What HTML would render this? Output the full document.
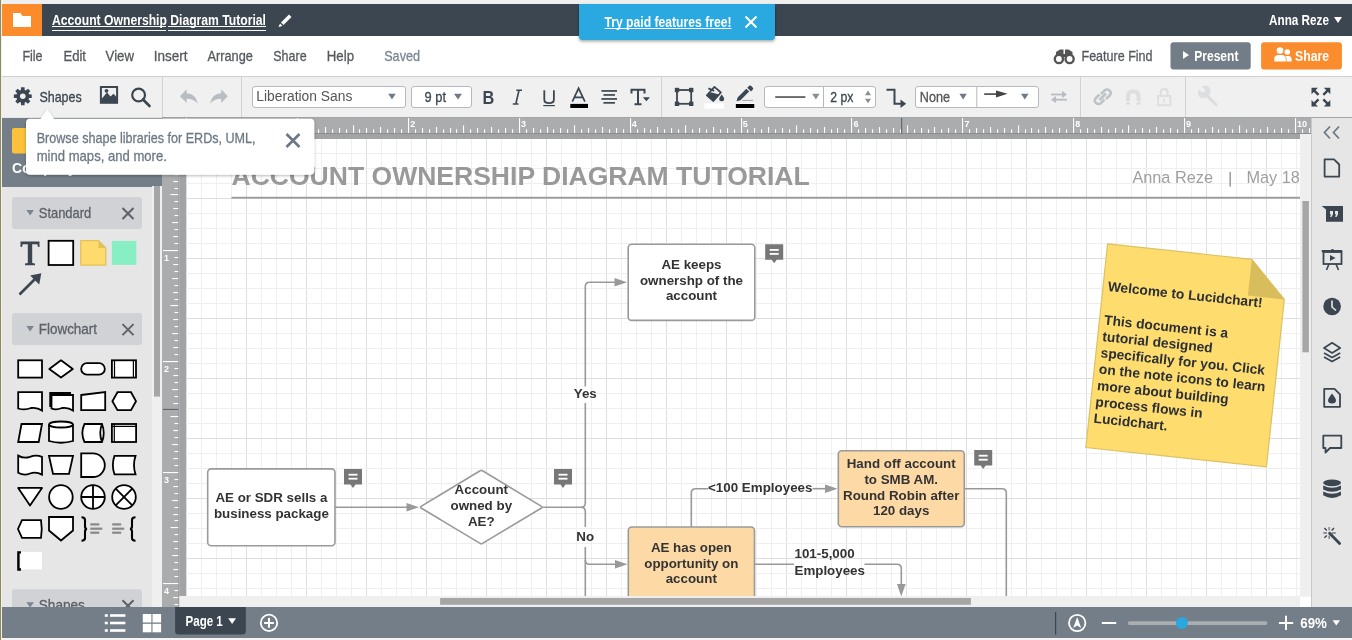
<!DOCTYPE html><html><head><meta charset="utf-8"><style>html,body{margin:0;padding:0;width:1352px;height:640px;overflow:hidden;background:#fff}svg{display:block;font-family:"Liberation Sans",sans-serif;will-change:transform}</style></head><body>
<svg width="1352" height="640" viewBox="0 0 1352 640">
<rect x="0" y="0" width="1352" height="640" fill="#ffffff" />
<rect x="0" y="0" width="1352" height="4" fill="#efefef" />
<rect x="0" y="4" width="1352" height="32" fill="#3c4650" />
<rect x="2" y="4" width="40" height="32" fill="#fb8b2b" />
<path d="M13 13 H20.5 L22.5 16 H31 V27 H13 Z" fill="#fff"/>
<text x="52" y="24.8" font-size="14" fill="#fff" font-weight="bold" textLength="214" lengthAdjust="spacingAndGlyphs" >Account Ownership Diagram Tutorial</text>
<rect x="52" y="26" width="114" height="1" fill="#fff" />
<rect x="168" y="26" width="98" height="1" fill="#fff" />
<rect x="52" y="30" width="114" height="1" fill="#fff" />
<rect x="168" y="30" width="98" height="1" fill="#fff" />
<path d="M281 22.5 L289 14.5 L291.5 17 L283.5 25 Z M280 23.5 L282.5 26 L278.5 27 Z" fill="#fff"/>
<text x="1269" y="24.7" font-size="14" fill="#fff" font-weight="bold" textLength="60" lengthAdjust="spacingAndGlyphs" >Anna Reze</text>
<path d="M1334 17 H1342 L1338 23 Z" fill="#fff"/>
<rect x="0" y="36" width="1352" height="40" fill="#ffffff" />
<text x="22.4" y="61.1" font-size="14.5" fill="#55595e" textLength="20.2" lengthAdjust="spacingAndGlyphs" stroke="#55595e" stroke-width="0.3">File</text>
<text x="63.4" y="61.1" font-size="14.5" fill="#55595e" textLength="22.6" lengthAdjust="spacingAndGlyphs" stroke="#55595e" stroke-width="0.3">Edit</text>
<text x="105.6" y="61.1" font-size="14.5" fill="#55595e" textLength="28.4" lengthAdjust="spacingAndGlyphs" stroke="#55595e" stroke-width="0.3">View</text>
<text x="153.8" y="61.1" font-size="14.5" fill="#55595e" textLength="33.8" lengthAdjust="spacingAndGlyphs" stroke="#55595e" stroke-width="0.3">Insert</text>
<text x="207.5" y="61.1" font-size="14.5" fill="#55595e" textLength="45.4" lengthAdjust="spacingAndGlyphs" stroke="#55595e" stroke-width="0.3">Arrange</text>
<text x="273.3" y="61.1" font-size="14.5" fill="#55595e" textLength="33.3" lengthAdjust="spacingAndGlyphs" stroke="#55595e" stroke-width="0.3">Share</text>
<text x="326.8" y="61.1" font-size="14.5" fill="#55595e" textLength="27.2" lengthAdjust="spacingAndGlyphs" stroke="#55595e" stroke-width="0.3">Help</text>
<text x="384.2" y="61.1" font-size="14.5" fill="#7a8694" textLength="35.8" lengthAdjust="spacingAndGlyphs" stroke="#7a8694" stroke-width="0.3">Saved</text>
<g fill="#555"><path d="M1056 52 L1060 49.5 H1063.5 V56 H1056 Z M1065 49.5 H1068.5 L1072.5 52 V56 H1065 Z M1062.5 54 H1066 V57 H1062.5 Z"/><circle cx="1058.9" cy="59" r="4.1" fill="none" stroke="#555" stroke-width="2.4"/><circle cx="1069.6" cy="59" r="4.1" fill="none" stroke="#555" stroke-width="2.4"/></g>
<text x="1081.5" y="60.9" font-size="14.5" fill="#555a60" textLength="71" lengthAdjust="spacingAndGlyphs" stroke="#555a60" stroke-width="0.3">Feature Find</text>
<rect x="1170.5" y="42.2" width="80.2" height="27.3" rx="3" fill="#737d87"/>
<path d="M1183 51 L1189 55 L1183 59 Z" fill="#fff"/>
<text x="1194.2" y="61" font-size="14.5" fill="#fff" font-weight="bold" textLength="44.3" lengthAdjust="spacingAndGlyphs" >Present</text>
<rect x="1261.1" y="42.2" width="80.8" height="27.3" rx="3" fill="#fb8c2e"/>
<g fill="#fff"><circle cx="1280" cy="50.5" r="3.3"/><path d="M1274.3 61.5 V58.5 Q1274.3 55.5 1277.5 55 H1282.5 Q1285.7 55.5 1285.7 58.5 V61.5 Z"/><circle cx="1287.3" cy="52" r="2.8"/><path d="M1286.5 61.5 V58.5 Q1286.5 56.3 1285 55.9 L1286 55.9 H1288.8 Q1291.6 56.3 1291.6 59 V61.5 Z"/></g>
<text x="1295" y="61" font-size="14.5" fill="#fff" font-weight="bold" textLength="34" lengthAdjust="spacingAndGlyphs" >Share</text>
<defs><filter id="sh" x="-10%" y="-30%" width="120%" height="180%"><feDropShadow dx="0" dy="1.5" stdDeviation="1.5" flood-color="#000" flood-opacity="0.35"/></filter><filter id="sh2" x="-10%" y="-30%" width="120%" height="160%"><feDropShadow dx="0" dy="1" stdDeviation="1.5" flood-color="#000" flood-opacity="0.3"/></filter></defs>
<path d="M579 4 H775 V36.5 Q775 40 771.5 40 H582.5 Q579 40 579 36.5 Z" fill="#29a8e0" filter="url(#sh)"/>
<text x="604.5" y="26.9" font-size="14" fill="#fff" font-weight="bold" textLength="127" lengthAdjust="spacingAndGlyphs" >Try paid features free!</text>
<rect x="604.5" y="28" width="127" height="1" fill="#fff" />
<path d="M745.5 16.5 L756.5 27.5 M756.5 16.5 L745.5 27.5" stroke="#fff" stroke-width="2"/>
<rect x="0" y="76" width="1352" height="41" fill="#f0f0f0" />
<rect x="0" y="76" width="1352" height="1" fill="#cfcfcf" />
<rect x="0" y="117" width="1352" height="1" fill="#a3a6a9" />
<rect x="162" y="77" width="1" height="40" fill="#d2d2d2" />
<rect x="241" y="77" width="1" height="40" fill="#d2d2d2" />
<rect x="661" y="77" width="1" height="40" fill="#d2d2d2" />
<rect x="1080" y="77" width="1" height="40" fill="#d2d2d2" />
<rect x="1185" y="77" width="1" height="40" fill="#d2d2d2" />
<path d="M20.90 89.98 L21.06 87.27 L24.54 87.27 L24.70 89.98 L25.85 90.46 L27.89 88.66 L30.34 91.11 L28.54 93.15 L29.02 94.30 L31.73 94.46 L31.73 97.94 L29.02 98.10 L28.54 99.25 L30.34 101.29 L27.89 103.74 L25.85 101.94 L24.70 102.42 L24.54 105.13 L21.06 105.13 L20.90 102.42 L19.75 101.94 L17.71 103.74 L15.26 101.29 L17.06 99.25 L16.58 98.10 L13.87 97.94 L13.87 94.46 L16.58 94.30 L17.06 93.15 L15.26 91.11 L17.71 88.66 L19.75 90.46 Z" fill="#3c4650"/><circle cx="22.8" cy="96.2" r="2.8" fill="#f0f0f0"/>
<text x="39.4" y="101.7" font-size="14.5" fill="#3c4650" textLength="42.3" lengthAdjust="spacingAndGlyphs" stroke="#3c4650" stroke-width="0.3">Shapes</text>
<rect x="100.9" y="87" width="16.2" height="15.8" fill="none" stroke="#3c4650" stroke-width="2"/><path d="M101.5 102.5 V99 L107 92.5 L110.5 96.5 L113.5 93.8 L117 97.5 V102.5 Z" fill="#3c4650"/><circle cx="106.5" cy="90.8" r="1.9" fill="#3c4650"/>
<circle cx="138.6" cy="95" r="6.4" fill="none" stroke="#3c4650" stroke-width="2.2"/><path d="M143 99.5 L149.5 106" stroke="#3c4650" stroke-width="2.6" stroke-linecap="round"/>
<path d="M180 96.2 L186.6 89.2 V93.2 Q195.8 93.6 197.8 103.6 Q193.5 98.8 186.6 98.8 V103 Z" fill="#b9bdc1"/>
<path d="M227.8 96.2 L221.2 89.2 V93.2 Q212 93.6 210 103.6 Q214.3 98.8 221.2 98.8 V103 Z" fill="#b9bdc1"/>
<rect x="252.5" y="86.5" width="153" height="21" rx="2.5" fill="#fff" stroke="#b5b9bd"/>
<text x="256.3" y="101.4" font-size="14" fill="#555" textLength="96" lengthAdjust="spacingAndGlyphs" >Liberation Sans</text>
<path d="M388.2 93.8 H395.7 L392 99.4 Z" fill="#707b86"/>
<rect x="411.5" y="86.5" width="60" height="21" rx="2.5" fill="#fff" stroke="#b5b9bd"/>
<text x="424.6" y="101.6" font-size="14.5" fill="#3c4650" textLength="21.4" lengthAdjust="spacingAndGlyphs" stroke="#3c4650" stroke-width="0.3">9 pt</text>
<path d="M454 93.8 H462 L458 99.4 Z" fill="#707b86"/>
<text x="482.6" y="104" font-size="18" fill="#3c4650" font-weight="bold" textLength="11.8" lengthAdjust="spacingAndGlyphs" >B</text>
<path d="M516.3 90.2 H522 M512.8 104 H518.5 M519 90.2 L515.8 104" stroke="#3c4650" stroke-width="1.6" fill="none"/>
<path d="M544.3 90.2 V99.5 Q544.3 103.2 549 103.2 Q553.9 103.2 553.9 99.5 V90.2" stroke="#3c4650" stroke-width="1.8" fill="none"/>
<rect x="543.3" y="105" width="11.6" height="1.2" fill="#3c4650" />
<path d="M572.3 101.7 L578.6 88.3 L584.9 101.7 M574.4 97.3 H582.8" stroke="#3c4650" stroke-width="1.7" fill="none"/>
<rect x="570.3" y="103.9" width="17.7" height="4.1" fill="#000" />
<rect x="601.4" y="90.10000000000001" width="15.600000000000023" height="1.7" fill="#3c4650" />
<rect x="603.4" y="94.10000000000001" width="11.600000000000023" height="1.7" fill="#3c4650" />
<rect x="601.4" y="98.10000000000001" width="15.600000000000023" height="1.7" fill="#3c4650" />
<rect x="603.4" y="102.0" width="11.600000000000023" height="1.7" fill="#3c4650" />
<path d="M631.5 93.5 V89.8 H644.5 V93.5 M638 89.8 V104.3 M634.5 104.3 H641.5" stroke="#3c4650" stroke-width="2" fill="none"/><path d="M642.8 97.2 H650 L646.4 101.2 Z" fill="#3c4650"/>
<rect x="677" y="90" width="14.2" height="13.8" fill="none" stroke="#3c4650" stroke-width="1.8"/>
<rect x="674.8" y="87.8" width="4.4" height="4.4" fill="#3c4650" />
<rect x="689.0" y="87.8" width="4.4" height="4.4" fill="#3c4650" />
<rect x="674.8" y="101.6" width="4.4" height="4.4" fill="#3c4650" />
<rect x="689.0" y="101.6" width="4.4" height="4.4" fill="#3c4650" />
<path d="M714.4 86.9 L720.9 92.5 L713.3 100.9 L706.9 95.3 Z" fill="none" stroke="#3c4650" stroke-width="1.7" stroke-linejoin="round"/><path d="M706.1 95.3 L710.9 92.2 L719.6 94.8 L713.3 101.7 Z" fill="#3c4650"/><path d="M708.4 88.4 L714.2 90.8" stroke="#3c4650" stroke-width="1.8"/><path d="M721.7 94.6 Q724.2 97.8 724.2 98.8 A2.5 2.5 0 0 1 719.2 98.8 Q719.2 97.8 721.7 94.6 Z" fill="#3c4650"/>
<rect x="704" y="103" width="20.2" height="6" fill="#fafafa" />
<rect x="705" y="104" width="18.2" height="4" fill="#fff" />
<path d="M736.6 101.2 L737.6 97.4 L746.3 88.7 L749.2 91.6 L740.5 100.3 Z M747.3 87.7 L749.2 85.8 Q750.1 85 751 85.8 L752.9 87.7 Q753.7 88.6 752.9 89.5 L751 91.4 Z" fill="#3c4650"/>
<rect x="742.3" y="99.9" width="10.7" height="1.1" fill="#a9aeb3" />
<rect x="735" y="103" width="20.3" height="6" fill="#fafafa" />
<rect x="735.8" y="104" width="18.5" height="4" fill="#000" />
<rect x="764.5" y="86.5" width="111" height="21" rx="2.5" fill="#fff" stroke="#b5b9bd"/>
<rect x="823" y="87" width="1" height="20" fill="#b5b9bd" />
<rect x="775.2" y="96.3" width="30.2" height="1.5" fill="#444" />
<path d="M812.1 93.8 H819.6 L815.9 99.4 Z" fill="#8a8f94"/>
<text x="830.2" y="101.6" font-size="14.5" fill="#3c4650" textLength="23.1" lengthAdjust="spacingAndGlyphs" stroke="#3c4650" stroke-width="0.3">2 px</text>
<path d="M865 95.2 L868 90.6 L871.1 95.2 Z M865 98.7 H871.1 L868 103.3 Z" fill="#8a8f94"/>
<path d="M886.5 89.8 H894.5 V103.8 H902" stroke="#3c4650" stroke-width="2" fill="none"/><path d="M900.5 99.5 L906.2 103.8 L900.5 108 Z" fill="#3c4650"/>
<rect x="915.5" y="86.5" width="123" height="21" rx="2.5" fill="#fff" stroke="#b5b9bd"/>
<rect x="976.3" y="87" width="1" height="20" fill="#b5b9bd" />
<text x="919.8" y="101.7" font-size="14.5" fill="#555" textLength="30.2" lengthAdjust="spacingAndGlyphs" stroke="#555" stroke-width="0.3">None</text>
<path d="M959.4 93.8 H966.8 L963.1 99.4 Z" fill="#707b86"/>
<rect x="984.2" y="93.3" width="15" height="1.6" fill="#444" />
<path d="M996 90.6 L1007.6 93.8 L996 97.4 Z" fill="#444"/>
<path d="M1021 93.8 H1028.6 L1024.8 99.4 Z" fill="#707b86"/>
<g fill="#b9bdc1"><rect x="1051" y="93.6" width="14" height="1.8"/><path d="M1062 90.8 L1067 94.5 L1062 98 Z"/><rect x="1053" y="98.8" width="14" height="1.8"/><path d="M1056 96 L1051 99.7 L1056 103 Z"/></g>
<g stroke="#bfc3c6" stroke-width="2.6" fill="none"><path d="M1101 94 L1104.5 90.5 Q1107 88.5 1109.5 90.5 Q1112 93 1109.5 95.5 L1106 99"/><path d="M1104.5 99.5 L1101 103 Q1098.5 105 1096 103 Q1093.5 100.5 1096 98 L1099.5 94.5"/><path d="M1099.5 100 L1106 93.5"/></g>
<path d="M1128 104.8 V97.3 Q1128 91.2 1133.3 91.2 Q1138.6 91.2 1138.6 97.3 V104.8" stroke="#dcdedf" stroke-width="4" fill="none"/>
<rect x="1125" y="101" width="17" height="1.1" fill="#f0f0f0" />
<path d="M1160.8 96 V92.3 Q1160.8 89 1164.2 89 Q1167.6 89 1167.6 92.3 V96" stroke="#dcdedf" stroke-width="2" fill="none"/><rect x="1158" y="96" width="12.4" height="9.2" fill="none" stroke="#dcdedf" stroke-width="1.9"/><rect x="1163.4" y="98.5" width="1.6" height="4" fill="#dcdedf"/>
<path d="M1216 104.6 L1206.5 95.1" stroke="#dcdedf" stroke-width="3" stroke-linecap="round"/><path d="M1207.3 96.5 A5 5 0 0 1 1199.2 89.6 L1202.3 92.4 L1204.6 91.9 L1205.1 89.6 L1202 86.8 A5 5 0 0 1 1208.8 94.8 Z" fill="#dcdedf"/>
<g fill="#3c4650"><path d="M1311.5 87.8 H1318 L1311.5 94.3 Z"/><path d="M1330.3 87.8 H1323.8 L1330.3 94.3 Z"/><path d="M1311.5 106.4 H1318 L1311.5 99.9 Z"/><path d="M1330.3 106.4 H1323.8 L1330.3 99.9 Z"/></g><path d="M1313 89.3 L1318.5 94.8 M1328.8 89.3 L1323.3 94.8 M1313 104.9 L1318.5 99.4 M1328.8 104.9 L1323.3 99.4" stroke="#3c4650" stroke-width="2.4"/>
<rect x="0" y="117" width="162" height="490" fill="#e6e6e6" />
<rect x="0" y="117" width="1" height="523" fill="#8f8c5a" />
<rect x="1" y="117" width="1" height="490" fill="#eeeeee" />
<rect x="2" y="118" width="160" height="69" fill="#737e88" />
<rect x="12" y="128" width="30" height="25.5" rx="2" fill="#fbc13a"/>
<text x="12.1" y="172.9" font-size="14" fill="#fff" font-weight="bold" >Company</text>
<rect x="152" y="186" width="10" height="421" fill="#efefef" />
<rect x="154" y="186" width="6" height="210.6" fill="#a6a6a6" />
<rect x="12" y="197" width="130" height="32" rx="3" fill="#d0d2d5"/>
<path d="M26.4 210 H33.9 L30.1 215.4 Z" fill="#7a8591"/>
<text x="38.8" y="218" font-size="14.5" fill="#5d6167" textLength="52.4" lengthAdjust="spacingAndGlyphs" stroke="#5d6167" stroke-width="0.3">Standard</text>
<path d="M122.5 208 L133.5 219 M133.5 208 L122.5 219" stroke="#5d6167" stroke-width="2"/>
<rect x="12" y="313.1" width="130" height="32" rx="3" fill="#d0d2d5"/>
<path d="M26.4 326.1 H33.9 L30.1 331.5 Z" fill="#7a8591"/>
<text x="38.8" y="334.1" font-size="14.5" fill="#5d6167" textLength="58.2" lengthAdjust="spacingAndGlyphs" stroke="#5d6167" stroke-width="0.3">Flowchart</text>
<path d="M122.5 324.1 L133.5 335.1 M133.5 324.1 L122.5 335.1" stroke="#5d6167" stroke-width="2"/>
<rect x="12" y="589.2" width="130" height="32" rx="3" fill="#d0d2d5"/>
<path d="M26.4 602.2 H33.9 L30.1 607.6 Z" fill="#7a8591"/>
<text x="38.8" y="610.2" font-size="14.5" fill="#5d6167" textLength="46" lengthAdjust="spacingAndGlyphs" stroke="#5d6167" stroke-width="0.3">Shapes</text>
<path d="M122.5 600.2 L133.5 611.2 M133.5 600.2 L122.5 611.2" stroke="#5d6167" stroke-width="2"/>
<path d="M20.5 241.5 H39.5 V247 H38 L37.3 244.3 H32.2 V263 L35 263.6 V265.3 H25 V263.6 L27.8 263 V244.3 H22.7 L22 247 H20.5 Z" fill="#3c4650"/>
<rect x="48.6" y="240.8" width="24.6" height="24.2" fill="#fff" stroke="#000" stroke-width="1.8"/>
<path d="M80.8 240.6 H98.5 L105.8 248 V265.2 H80.8 Z" fill="#ffdb6d" stroke="#e2c15a" stroke-width="1.3"/><path d="M98.5 240.6 V248 H105.8 Z" fill="#e2c15a"/>
<rect x="111.9" y="240.9" width="24.4" height="24" fill="#88eec4" />
<path d="M19.5 294.5 L36 278" stroke="#3c4650" stroke-width="2.6"/><path d="M41.3 273.3 L39.2 284.5 L30.2 275.5 Z" fill="#3c4650"/>
<rect x="18.2" y="360.3" width="23.8" height="17.3" fill="#fff" stroke="#000" stroke-width="1.8"/><path d="M49.3 369 L61 360.3 L72.8 369 L61 377.6 Z" fill="#fff" stroke="#000" stroke-width="1.8" stroke-linejoin="round"/><rect x="81.2" y="363.2" width="23.6" height="11.4" rx="5.7" fill="#fff" stroke="#000" stroke-width="1.8"/><rect x="111.9" y="360.3" width="24.1" height="17.3" fill="#fff" stroke="#000" stroke-width="1.8"/><path d="M114.5 360.5 V377.5 M133.4 360.5 V377.5" stroke="#000" stroke-width="1.2"/><path d="M18.2 392.2 H42 V410.5 Q37 407 31 408 Q25 410.5 18.2 408.5 Z" fill="#fff" stroke="#000" stroke-width="1.8"/><path d="M51.5 395 H73 V410.5 Q68 407 62 408 Q56 410.5 51.5 408.5 Z" fill="#fff" stroke="#000" stroke-width="1.8"/><path d="M49.3 392 H71 V395 H51.5 V407 H49.3 Z" fill="#000"/><path d="M81.2 395 L105.2 392 V410.2 H81.2 Z" fill="#fff" stroke="#000" stroke-width="1.8"/><path d="M112.4 401.2 L117.5 392.2 H131 L136 401.2 L131 410.2 H117.5 Z" fill="#fff" stroke="#000" stroke-width="1.8"/><path d="M21.5 424 H42 L38.7 442 H18.2 Z" fill="#fff" stroke="#000" stroke-width="1.8"/><path d="M49 424.5 V441 Q61 444.5 73 441 V424.5" fill="#fff" stroke="#000" stroke-width="1.8"/><ellipse cx="61" cy="424.5" rx="12" ry="3" fill="#fff" stroke="#000" stroke-width="1.8"/><path d="M84.5 424 H102 Q105.5 433 102 442 H84.5 Q80.2 433 84.5 424 Z" fill="#fff" stroke="#000" stroke-width="1.8"/><path d="M102 424 Q98.5 433 102 442" fill="none" stroke="#000" stroke-width="1.8"/><rect x="111.9" y="424" width="24.2" height="18" fill="#fff" stroke="#000" stroke-width="1.8"/><path d="M112 426.3 H136 M114.3 424 V442" stroke="#000" stroke-width="1.2"/><path d="M18.2 455.6 Q24 459 30 456.8 Q36 454.3 42 456.8 V474.6 Q36 471.3 30 473.5 Q24 476 18.2 472.8 Z" fill="#fff" stroke="#000" stroke-width="1.8"/><path d="M49 455.9 H73 L69 473.8 H53 Z" fill="#fff" stroke="#000" stroke-width="1.8"/><path d="M81.2 453.4 H93 A11.8 11.8 0 0 1 93 477 H81.2 Z" fill="#fff" stroke="#000" stroke-width="1.8"/><path d="M114.5 455.9 H135.5 Q132.5 465 135.5 474.3 H114.5 Q111.2 465 114.5 455.9 Z" fill="#fff" stroke="#000" stroke-width="1.8"/><path d="M18.2 487.9 H42 L30 505.6 Z" fill="#fff" stroke="#000" stroke-width="1.8" stroke-linejoin="round"/><circle cx="60.9" cy="497" r="11.8" fill="#fff" stroke="#000" stroke-width="1.8"/><circle cx="93" cy="497" r="11.8" fill="#fff" stroke="#000" stroke-width="1.8"/><path d="M93 485.2 V508.8 M81.2 497 H104.8" stroke="#000" stroke-width="1.8"/><circle cx="124" cy="497" r="11.8" fill="#fff" stroke="#000" stroke-width="1.8"/><path d="M115.7 488.7 L132.3 505.3 M132.3 488.7 L115.7 505.3" stroke="#000" stroke-width="1.8"/><path d="M22 520.2 H41 Q42.5 529 41 537.8 H22 L18 529 Z" fill="#fff" stroke="#000" stroke-width="1.8"/><path d="M49 517 H73 V530.5 L61 540.5 L49 530.5 Z" fill="#fff" stroke="#000" stroke-width="1.8"/><path d="M81.5 517.3 Q85 517.3 85 520 V526.5 Q85 528.8 87 529 Q85 529.2 85 531.5 V538 Q85 540.7 81.5 540.7" fill="none" stroke="#000" stroke-width="2.1"/><path d="M135.5 517.3 Q132 517.3 132 520 V526.5 Q132 528.8 130 529 Q132 529.2 132 531.5 V538 Q132 540.7 135.5 540.7" fill="none" stroke="#000" stroke-width="2.1"/><rect x="90.3" y="523.3" width="9" height="2.2" fill="#888"/><rect x="90.3" y="527.6" width="12" height="2.2" fill="#888"/><rect x="90.3" y="531.6" width="9" height="2.2" fill="#888"/><rect x="112.2" y="523.3" width="9" height="2.2" fill="#888"/><rect x="112.2" y="527.6" width="12" height="2.2" fill="#888"/><rect x="112.2" y="531.6" width="9" height="2.2" fill="#888"/><rect x="20.3" y="551.9" width="21.6" height="17.5" fill="#fff"/><path d="M21 552.4 H18.4 V569.5 H21" fill="none" stroke="#000" stroke-width="2.4"/>
<rect x="162" y="118" width="24" height="489.4" fill="#efefef" />
<rect x="162" y="118" width="1150" height="21.4" fill="#efefef" />
<rect x="162" y="118" width="1149" height="15" fill="#aaacae" />
<rect x="162" y="133" width="1149" height="1" fill="#8c8f92" />
<rect x="186" y="134" width="1114" height="5" fill="#a1a3a5" />
<rect x="162" y="118" width="16.2" height="489.4" fill="#aaacae" />
<rect x="178.2" y="118" width="1" height="489.4" fill="#8c8f92" />
<rect x="179.2" y="139" width="6.8" height="457" fill="#a1a3a5" />
<rect x="162" y="118" width="24" height="16" fill="#aaacae" />
<rect x="166" y="129.30" width="1.1" height="3.7" fill="#fff"/><rect x="172" y="128.10" width="1.1" height="4.9" fill="#fff"/><rect x="179" y="129.30" width="1.1" height="3.7" fill="#fff"/><rect x="186" y="118" width="1.1" height="15" fill="#fff"/><rect x="193" y="129.30" width="1.1" height="3.7" fill="#fff"/><rect x="200" y="128.10" width="1.1" height="4.9" fill="#fff"/><rect x="207" y="129.30" width="1.1" height="3.7" fill="#fff"/><rect x="214" y="127.00" width="1.1" height="6" fill="#fff"/><rect x="221" y="129.30" width="1.1" height="3.7" fill="#fff"/><rect x="228" y="128.10" width="1.1" height="4.9" fill="#fff"/><rect x="235" y="129.30" width="1.1" height="3.7" fill="#fff"/><rect x="242" y="125.30" width="1.1" height="7.7" fill="#fff"/><rect x="249" y="129.30" width="1.1" height="3.7" fill="#fff"/><rect x="256" y="128.10" width="1.1" height="4.9" fill="#fff"/><rect x="263" y="129.30" width="1.1" height="3.7" fill="#fff"/><rect x="269" y="127.00" width="1.1" height="6" fill="#fff"/><rect x="276" y="129.30" width="1.1" height="3.7" fill="#fff"/><rect x="283" y="128.10" width="1.1" height="4.9" fill="#fff"/><rect x="290" y="129.30" width="1.1" height="3.7" fill="#fff"/><rect x="297" y="118" width="1.1" height="15" fill="#fff"/><rect x="304" y="129.30" width="1.1" height="3.7" fill="#fff"/><rect x="311" y="128.10" width="1.1" height="4.9" fill="#fff"/><rect x="318" y="129.30" width="1.1" height="3.7" fill="#fff"/><rect x="325" y="127.00" width="1.1" height="6" fill="#fff"/><rect x="332" y="129.30" width="1.1" height="3.7" fill="#fff"/><rect x="339" y="128.10" width="1.1" height="4.9" fill="#fff"/><rect x="346" y="129.30" width="1.1" height="3.7" fill="#fff"/><rect x="353" y="125.30" width="1.1" height="7.7" fill="#fff"/><rect x="359" y="129.30" width="1.1" height="3.7" fill="#fff"/><rect x="366" y="128.10" width="1.1" height="4.9" fill="#fff"/><rect x="373" y="129.30" width="1.1" height="3.7" fill="#fff"/><rect x="380" y="127.00" width="1.1" height="6" fill="#fff"/><rect x="387" y="129.30" width="1.1" height="3.7" fill="#fff"/><rect x="394" y="128.10" width="1.1" height="4.9" fill="#fff"/><rect x="401" y="129.30" width="1.1" height="3.7" fill="#fff"/><rect x="408" y="118" width="1.1" height="15" fill="#fff"/><rect x="415" y="129.30" width="1.1" height="3.7" fill="#fff"/><rect x="422" y="128.10" width="1.1" height="4.9" fill="#fff"/><rect x="429" y="129.30" width="1.1" height="3.7" fill="#fff"/><rect x="436" y="127.00" width="1.1" height="6" fill="#fff"/><rect x="443" y="129.30" width="1.1" height="3.7" fill="#fff"/><rect x="450" y="128.10" width="1.1" height="4.9" fill="#fff"/><rect x="456" y="129.30" width="1.1" height="3.7" fill="#fff"/><rect x="463" y="125.30" width="1.1" height="7.7" fill="#fff"/><rect x="470" y="129.30" width="1.1" height="3.7" fill="#fff"/><rect x="477" y="128.10" width="1.1" height="4.9" fill="#fff"/><rect x="484" y="129.30" width="1.1" height="3.7" fill="#fff"/><rect x="491" y="127.00" width="1.1" height="6" fill="#fff"/><rect x="498" y="129.30" width="1.1" height="3.7" fill="#fff"/><rect x="505" y="128.10" width="1.1" height="4.9" fill="#fff"/><rect x="512" y="129.30" width="1.1" height="3.7" fill="#fff"/><rect x="519" y="118" width="1.1" height="15" fill="#fff"/><rect x="526" y="129.30" width="1.1" height="3.7" fill="#fff"/><rect x="533" y="128.10" width="1.1" height="4.9" fill="#fff"/><rect x="540" y="129.30" width="1.1" height="3.7" fill="#fff"/><rect x="547" y="127.00" width="1.1" height="6" fill="#fff"/><rect x="553" y="129.30" width="1.1" height="3.7" fill="#fff"/><rect x="560" y="128.10" width="1.1" height="4.9" fill="#fff"/><rect x="567" y="129.30" width="1.1" height="3.7" fill="#fff"/><rect x="574" y="125.30" width="1.1" height="7.7" fill="#fff"/><rect x="581" y="129.30" width="1.1" height="3.7" fill="#fff"/><rect x="588" y="128.10" width="1.1" height="4.9" fill="#fff"/><rect x="595" y="129.30" width="1.1" height="3.7" fill="#fff"/><rect x="602" y="127.00" width="1.1" height="6" fill="#fff"/><rect x="609" y="129.30" width="1.1" height="3.7" fill="#fff"/><rect x="616" y="128.10" width="1.1" height="4.9" fill="#fff"/><rect x="623" y="129.30" width="1.1" height="3.7" fill="#fff"/><rect x="630" y="118" width="1.1" height="15" fill="#fff"/><rect x="637" y="129.30" width="1.1" height="3.7" fill="#fff"/><rect x="644" y="128.10" width="1.1" height="4.9" fill="#fff"/><rect x="650" y="129.30" width="1.1" height="3.7" fill="#fff"/><rect x="657" y="127.00" width="1.1" height="6" fill="#fff"/><rect x="664" y="129.30" width="1.1" height="3.7" fill="#fff"/><rect x="671" y="128.10" width="1.1" height="4.9" fill="#fff"/><rect x="678" y="129.30" width="1.1" height="3.7" fill="#fff"/><rect x="685" y="125.30" width="1.1" height="7.7" fill="#fff"/><rect x="692" y="129.30" width="1.1" height="3.7" fill="#fff"/><rect x="699" y="128.10" width="1.1" height="4.9" fill="#fff"/><rect x="706" y="129.30" width="1.1" height="3.7" fill="#fff"/><rect x="713" y="127.00" width="1.1" height="6" fill="#fff"/><rect x="720" y="129.30" width="1.1" height="3.7" fill="#fff"/><rect x="727" y="128.10" width="1.1" height="4.9" fill="#fff"/><rect x="734" y="129.30" width="1.1" height="3.7" fill="#fff"/><rect x="741" y="118" width="1.1" height="15" fill="#fff"/><rect x="747" y="129.30" width="1.1" height="3.7" fill="#fff"/><rect x="754" y="128.10" width="1.1" height="4.9" fill="#fff"/><rect x="761" y="129.30" width="1.1" height="3.7" fill="#fff"/><rect x="768" y="127.00" width="1.1" height="6" fill="#fff"/><rect x="775" y="129.30" width="1.1" height="3.7" fill="#fff"/><rect x="782" y="128.10" width="1.1" height="4.9" fill="#fff"/><rect x="789" y="129.30" width="1.1" height="3.7" fill="#fff"/><rect x="796" y="125.30" width="1.1" height="7.7" fill="#fff"/><rect x="803" y="129.30" width="1.1" height="3.7" fill="#fff"/><rect x="810" y="128.10" width="1.1" height="4.9" fill="#fff"/><rect x="817" y="129.30" width="1.1" height="3.7" fill="#fff"/><rect x="824" y="127.00" width="1.1" height="6" fill="#fff"/><rect x="831" y="129.30" width="1.1" height="3.7" fill="#fff"/><rect x="837" y="128.10" width="1.1" height="4.9" fill="#fff"/><rect x="844" y="129.30" width="1.1" height="3.7" fill="#fff"/><rect x="851" y="118" width="1.1" height="15" fill="#fff"/><rect x="858" y="129.30" width="1.1" height="3.7" fill="#fff"/><rect x="865" y="128.10" width="1.1" height="4.9" fill="#fff"/><rect x="872" y="129.30" width="1.1" height="3.7" fill="#fff"/><rect x="879" y="127.00" width="1.1" height="6" fill="#fff"/><rect x="886" y="129.30" width="1.1" height="3.7" fill="#fff"/><rect x="893" y="128.10" width="1.1" height="4.9" fill="#fff"/><rect x="900" y="129.30" width="1.1" height="3.7" fill="#fff"/><rect x="907" y="125.30" width="1.1" height="7.7" fill="#fff"/><rect x="914" y="129.30" width="1.1" height="3.7" fill="#fff"/><rect x="921" y="128.10" width="1.1" height="4.9" fill="#fff"/><rect x="928" y="129.30" width="1.1" height="3.7" fill="#fff"/><rect x="934" y="127.00" width="1.1" height="6" fill="#fff"/><rect x="941" y="129.30" width="1.1" height="3.7" fill="#fff"/><rect x="948" y="128.10" width="1.1" height="4.9" fill="#fff"/><rect x="955" y="129.30" width="1.1" height="3.7" fill="#fff"/><rect x="962" y="118" width="1.1" height="15" fill="#fff"/><rect x="969" y="129.30" width="1.1" height="3.7" fill="#fff"/><rect x="976" y="128.10" width="1.1" height="4.9" fill="#fff"/><rect x="983" y="129.30" width="1.1" height="3.7" fill="#fff"/><rect x="990" y="127.00" width="1.1" height="6" fill="#fff"/><rect x="997" y="129.30" width="1.1" height="3.7" fill="#fff"/><rect x="1004" y="128.10" width="1.1" height="4.9" fill="#fff"/><rect x="1011" y="129.30" width="1.1" height="3.7" fill="#fff"/><rect x="1018" y="125.30" width="1.1" height="7.7" fill="#fff"/><rect x="1025" y="129.30" width="1.1" height="3.7" fill="#fff"/><rect x="1031" y="128.10" width="1.1" height="4.9" fill="#fff"/><rect x="1038" y="129.30" width="1.1" height="3.7" fill="#fff"/><rect x="1045" y="127.00" width="1.1" height="6" fill="#fff"/><rect x="1052" y="129.30" width="1.1" height="3.7" fill="#fff"/><rect x="1059" y="128.10" width="1.1" height="4.9" fill="#fff"/><rect x="1066" y="129.30" width="1.1" height="3.7" fill="#fff"/><rect x="1073" y="118" width="1.1" height="15" fill="#fff"/><rect x="1080" y="129.30" width="1.1" height="3.7" fill="#fff"/><rect x="1087" y="128.10" width="1.1" height="4.9" fill="#fff"/><rect x="1094" y="129.30" width="1.1" height="3.7" fill="#fff"/><rect x="1101" y="127.00" width="1.1" height="6" fill="#fff"/><rect x="1108" y="129.30" width="1.1" height="3.7" fill="#fff"/><rect x="1115" y="128.10" width="1.1" height="4.9" fill="#fff"/><rect x="1122" y="129.30" width="1.1" height="3.7" fill="#fff"/><rect x="1128" y="125.30" width="1.1" height="7.7" fill="#fff"/><rect x="1135" y="129.30" width="1.1" height="3.7" fill="#fff"/><rect x="1142" y="128.10" width="1.1" height="4.9" fill="#fff"/><rect x="1149" y="129.30" width="1.1" height="3.7" fill="#fff"/><rect x="1156" y="127.00" width="1.1" height="6" fill="#fff"/><rect x="1163" y="129.30" width="1.1" height="3.7" fill="#fff"/><rect x="1170" y="128.10" width="1.1" height="4.9" fill="#fff"/><rect x="1177" y="129.30" width="1.1" height="3.7" fill="#fff"/><rect x="1184" y="118" width="1.1" height="15" fill="#fff"/><rect x="1191" y="129.30" width="1.1" height="3.7" fill="#fff"/><rect x="1198" y="128.10" width="1.1" height="4.9" fill="#fff"/><rect x="1205" y="129.30" width="1.1" height="3.7" fill="#fff"/><rect x="1212" y="127.00" width="1.1" height="6" fill="#fff"/><rect x="1218" y="129.30" width="1.1" height="3.7" fill="#fff"/><rect x="1225" y="128.10" width="1.1" height="4.9" fill="#fff"/><rect x="1232" y="129.30" width="1.1" height="3.7" fill="#fff"/><rect x="1239" y="125.30" width="1.1" height="7.7" fill="#fff"/><rect x="1246" y="129.30" width="1.1" height="3.7" fill="#fff"/><rect x="1253" y="128.10" width="1.1" height="4.9" fill="#fff"/><rect x="1260" y="129.30" width="1.1" height="3.7" fill="#fff"/><rect x="1267" y="127.00" width="1.1" height="6" fill="#fff"/><rect x="1274" y="129.30" width="1.1" height="3.7" fill="#fff"/><rect x="1281" y="128.10" width="1.1" height="4.9" fill="#fff"/><rect x="1288" y="129.30" width="1.1" height="3.7" fill="#fff"/><rect x="1295" y="118" width="1.1" height="15" fill="#fff"/><rect x="1302" y="129.30" width="1.1" height="3.7" fill="#fff"/><rect x="1309" y="128.10" width="1.1" height="4.9" fill="#fff"/><rect x="163" y="139" width="15.2" height="1.1" fill="#fff"/><rect x="174.50" y="146" width="3.7" height="1.1" fill="#fff"/><rect x="173.30" y="153" width="4.9" height="1.1" fill="#fff"/><rect x="174.50" y="160" width="3.7" height="1.1" fill="#fff"/><rect x="172.20" y="167" width="6" height="1.1" fill="#fff"/><rect x="174.50" y="174" width="3.7" height="1.1" fill="#fff"/><rect x="173.30" y="181" width="4.9" height="1.1" fill="#fff"/><rect x="174.50" y="188" width="3.7" height="1.1" fill="#fff"/><rect x="170.50" y="194" width="7.7" height="1.1" fill="#fff"/><rect x="174.50" y="201" width="3.7" height="1.1" fill="#fff"/><rect x="173.30" y="208" width="4.9" height="1.1" fill="#fff"/><rect x="174.50" y="215" width="3.7" height="1.1" fill="#fff"/><rect x="172.20" y="222" width="6" height="1.1" fill="#fff"/><rect x="174.50" y="229" width="3.7" height="1.1" fill="#fff"/><rect x="173.30" y="236" width="4.9" height="1.1" fill="#fff"/><rect x="174.50" y="243" width="3.7" height="1.1" fill="#fff"/><rect x="163" y="250" width="15.2" height="1.1" fill="#fff"/><rect x="174.50" y="257" width="3.7" height="1.1" fill="#fff"/><rect x="173.30" y="264" width="4.9" height="1.1" fill="#fff"/><rect x="174.50" y="271" width="3.7" height="1.1" fill="#fff"/><rect x="172.20" y="278" width="6" height="1.1" fill="#fff"/><rect x="174.50" y="285" width="3.7" height="1.1" fill="#fff"/><rect x="173.30" y="292" width="4.9" height="1.1" fill="#fff"/><rect x="174.50" y="299" width="3.7" height="1.1" fill="#fff"/><rect x="170.50" y="305" width="7.7" height="1.1" fill="#fff"/><rect x="174.50" y="312" width="3.7" height="1.1" fill="#fff"/><rect x="173.30" y="319" width="4.9" height="1.1" fill="#fff"/><rect x="174.50" y="326" width="3.7" height="1.1" fill="#fff"/><rect x="172.20" y="333" width="6" height="1.1" fill="#fff"/><rect x="174.50" y="340" width="3.7" height="1.1" fill="#fff"/><rect x="173.30" y="347" width="4.9" height="1.1" fill="#fff"/><rect x="174.50" y="354" width="3.7" height="1.1" fill="#fff"/><rect x="163" y="361" width="15.2" height="1.1" fill="#fff"/><rect x="174.50" y="368" width="3.7" height="1.1" fill="#fff"/><rect x="173.30" y="375" width="4.9" height="1.1" fill="#fff"/><rect x="174.50" y="382" width="3.7" height="1.1" fill="#fff"/><rect x="172.20" y="389" width="6" height="1.1" fill="#fff"/><rect x="174.50" y="396" width="3.7" height="1.1" fill="#fff"/><rect x="173.30" y="403" width="4.9" height="1.1" fill="#fff"/><rect x="174.50" y="409" width="3.7" height="1.1" fill="#fff"/><rect x="170.50" y="416" width="7.7" height="1.1" fill="#fff"/><rect x="174.50" y="423" width="3.7" height="1.1" fill="#fff"/><rect x="173.30" y="430" width="4.9" height="1.1" fill="#fff"/><rect x="174.50" y="437" width="3.7" height="1.1" fill="#fff"/><rect x="172.20" y="444" width="6" height="1.1" fill="#fff"/><rect x="174.50" y="451" width="3.7" height="1.1" fill="#fff"/><rect x="173.30" y="458" width="4.9" height="1.1" fill="#fff"/><rect x="174.50" y="465" width="3.7" height="1.1" fill="#fff"/><rect x="163" y="472" width="15.2" height="1.1" fill="#fff"/><rect x="174.50" y="479" width="3.7" height="1.1" fill="#fff"/><rect x="173.30" y="486" width="4.9" height="1.1" fill="#fff"/><rect x="174.50" y="493" width="3.7" height="1.1" fill="#fff"/><rect x="172.20" y="500" width="6" height="1.1" fill="#fff"/><rect x="174.50" y="507" width="3.7" height="1.1" fill="#fff"/><rect x="173.30" y="514" width="4.9" height="1.1" fill="#fff"/><rect x="174.50" y="520" width="3.7" height="1.1" fill="#fff"/><rect x="170.50" y="527" width="7.7" height="1.1" fill="#fff"/><rect x="174.50" y="534" width="3.7" height="1.1" fill="#fff"/><rect x="173.30" y="541" width="4.9" height="1.1" fill="#fff"/><rect x="174.50" y="548" width="3.7" height="1.1" fill="#fff"/><rect x="172.20" y="555" width="6" height="1.1" fill="#fff"/><rect x="174.50" y="562" width="3.7" height="1.1" fill="#fff"/><rect x="173.30" y="569" width="4.9" height="1.1" fill="#fff"/><rect x="174.50" y="576" width="3.7" height="1.1" fill="#fff"/><rect x="163" y="583" width="15.2" height="1.1" fill="#fff"/><rect x="174.50" y="590" width="3.7" height="1.1" fill="#fff"/><rect x="173.30" y="597" width="4.9" height="1.1" fill="#fff"/><rect x="174.50" y="604" width="3.7" height="1.1" fill="#fff"/>
<rect x="901.1" y="117.9" width="1.1" height="15.7" fill="#5a6570" />
<rect x="163" y="408.9" width="15.5" height="1.1" fill="#5a6570" />
<text x="299.34" y="126.8" font-size="9" fill="#fff" font-weight="bold" >1</text>
<text x="410.18" y="126.8" font-size="9" fill="#fff" font-weight="bold" >2</text>
<text x="521.02" y="126.8" font-size="9" fill="#fff" font-weight="bold" >3</text>
<text x="631.86" y="126.8" font-size="9" fill="#fff" font-weight="bold" >4</text>
<text x="742.7" y="126.8" font-size="9" fill="#fff" font-weight="bold" >5</text>
<text x="853.54" y="126.8" font-size="9" fill="#fff" font-weight="bold" >6</text>
<text x="964.38" y="126.8" font-size="9" fill="#fff" font-weight="bold" >7</text>
<text x="1075.22" y="126.8" font-size="9" fill="#fff" font-weight="bold" >8</text>
<text x="1186.06" y="126.8" font-size="9" fill="#fff" font-weight="bold" >9</text>
<text x="1296.9" y="126.8" font-size="9" fill="#fff" font-weight="bold" >10</text>
<text x="164" y="260.77" font-size="9" fill="#fff" font-weight="bold" >1</text>
<text x="164" y="371.74" font-size="9" fill="#fff" font-weight="bold" >2</text>
<text x="164" y="482.71" font-size="9" fill="#fff" font-weight="bold" >3</text>
<text x="164" y="593.68" font-size="9" fill="#fff" font-weight="bold" >4</text>
<svg x="186" y="139" width="1114" height="457" viewBox="186 139 1114 457" overflow="hidden">
<rect x="186" y="139" width="1114" height="457" fill="#fff" />
<rect x="186" y="139" width="1" height="457" fill="#dedede"/><rect x="201" y="139" width="1" height="457" fill="#efefef"/><rect x="216" y="139" width="1" height="457" fill="#efefef"/><rect x="231" y="139" width="1" height="457" fill="#efefef"/><rect x="246" y="139" width="1" height="457" fill="#dedede"/><rect x="261" y="139" width="1" height="457" fill="#efefef"/><rect x="276" y="139" width="1" height="457" fill="#efefef"/><rect x="291" y="139" width="1" height="457" fill="#efefef"/><rect x="306" y="139" width="1" height="457" fill="#dedede"/><rect x="321" y="139" width="1" height="457" fill="#efefef"/><rect x="336" y="139" width="1" height="457" fill="#efefef"/><rect x="351" y="139" width="1" height="457" fill="#efefef"/><rect x="366" y="139" width="1" height="457" fill="#dedede"/><rect x="381" y="139" width="1" height="457" fill="#efefef"/><rect x="396" y="139" width="1" height="457" fill="#efefef"/><rect x="411" y="139" width="1" height="457" fill="#efefef"/><rect x="426" y="139" width="1" height="457" fill="#dedede"/><rect x="441" y="139" width="1" height="457" fill="#efefef"/><rect x="456" y="139" width="1" height="457" fill="#efefef"/><rect x="471" y="139" width="1" height="457" fill="#efefef"/><rect x="486" y="139" width="1" height="457" fill="#dedede"/><rect x="501" y="139" width="1" height="457" fill="#efefef"/><rect x="516" y="139" width="1" height="457" fill="#efefef"/><rect x="531" y="139" width="1" height="457" fill="#efefef"/><rect x="546" y="139" width="1" height="457" fill="#dedede"/><rect x="561" y="139" width="1" height="457" fill="#efefef"/><rect x="576" y="139" width="1" height="457" fill="#efefef"/><rect x="591" y="139" width="1" height="457" fill="#efefef"/><rect x="606" y="139" width="1" height="457" fill="#dedede"/><rect x="621" y="139" width="1" height="457" fill="#efefef"/><rect x="636" y="139" width="1" height="457" fill="#efefef"/><rect x="651" y="139" width="1" height="457" fill="#efefef"/><rect x="666" y="139" width="1" height="457" fill="#dedede"/><rect x="681" y="139" width="1" height="457" fill="#efefef"/><rect x="696" y="139" width="1" height="457" fill="#efefef"/><rect x="711" y="139" width="1" height="457" fill="#efefef"/><rect x="726" y="139" width="1" height="457" fill="#dedede"/><rect x="741" y="139" width="1" height="457" fill="#efefef"/><rect x="756" y="139" width="1" height="457" fill="#efefef"/><rect x="771" y="139" width="1" height="457" fill="#efefef"/><rect x="786" y="139" width="1" height="457" fill="#dedede"/><rect x="801" y="139" width="1" height="457" fill="#efefef"/><rect x="816" y="139" width="1" height="457" fill="#efefef"/><rect x="831" y="139" width="1" height="457" fill="#efefef"/><rect x="846" y="139" width="1" height="457" fill="#dedede"/><rect x="861" y="139" width="1" height="457" fill="#efefef"/><rect x="876" y="139" width="1" height="457" fill="#efefef"/><rect x="891" y="139" width="1" height="457" fill="#efefef"/><rect x="906" y="139" width="1" height="457" fill="#dedede"/><rect x="921" y="139" width="1" height="457" fill="#efefef"/><rect x="936" y="139" width="1" height="457" fill="#efefef"/><rect x="951" y="139" width="1" height="457" fill="#efefef"/><rect x="966" y="139" width="1" height="457" fill="#dedede"/><rect x="981" y="139" width="1" height="457" fill="#efefef"/><rect x="996" y="139" width="1" height="457" fill="#efefef"/><rect x="1011" y="139" width="1" height="457" fill="#efefef"/><rect x="1026" y="139" width="1" height="457" fill="#dedede"/><rect x="1041" y="139" width="1" height="457" fill="#efefef"/><rect x="1056" y="139" width="1" height="457" fill="#efefef"/><rect x="1071" y="139" width="1" height="457" fill="#efefef"/><rect x="1086" y="139" width="1" height="457" fill="#dedede"/><rect x="1101" y="139" width="1" height="457" fill="#efefef"/><rect x="1116" y="139" width="1" height="457" fill="#efefef"/><rect x="1131" y="139" width="1" height="457" fill="#efefef"/><rect x="1146" y="139" width="1" height="457" fill="#dedede"/><rect x="1161" y="139" width="1" height="457" fill="#efefef"/><rect x="1176" y="139" width="1" height="457" fill="#efefef"/><rect x="1191" y="139" width="1" height="457" fill="#efefef"/><rect x="1206" y="139" width="1" height="457" fill="#dedede"/><rect x="1221" y="139" width="1" height="457" fill="#efefef"/><rect x="1236" y="139" width="1" height="457" fill="#efefef"/><rect x="1251" y="139" width="1" height="457" fill="#efefef"/><rect x="1266" y="139" width="1" height="457" fill="#dedede"/><rect x="1281" y="139" width="1" height="457" fill="#efefef"/><rect x="1296" y="139" width="1" height="457" fill="#efefef"/><rect x="186" y="138" width="1114" height="1" fill="#dedede"/><rect x="186" y="153" width="1114" height="1" fill="#efefef"/><rect x="186" y="168" width="1114" height="1" fill="#efefef"/><rect x="186" y="183" width="1114" height="1" fill="#efefef"/><rect x="186" y="198" width="1114" height="1" fill="#dedede"/><rect x="186" y="213" width="1114" height="1" fill="#efefef"/><rect x="186" y="228" width="1114" height="1" fill="#efefef"/><rect x="186" y="243" width="1114" height="1" fill="#efefef"/><rect x="186" y="258" width="1114" height="1" fill="#dedede"/><rect x="186" y="273" width="1114" height="1" fill="#efefef"/><rect x="186" y="288" width="1114" height="1" fill="#efefef"/><rect x="186" y="303" width="1114" height="1" fill="#efefef"/><rect x="186" y="318" width="1114" height="1" fill="#dedede"/><rect x="186" y="333" width="1114" height="1" fill="#efefef"/><rect x="186" y="348" width="1114" height="1" fill="#efefef"/><rect x="186" y="363" width="1114" height="1" fill="#efefef"/><rect x="186" y="378" width="1114" height="1" fill="#dedede"/><rect x="186" y="393" width="1114" height="1" fill="#efefef"/><rect x="186" y="408" width="1114" height="1" fill="#efefef"/><rect x="186" y="423" width="1114" height="1" fill="#efefef"/><rect x="186" y="438" width="1114" height="1" fill="#dedede"/><rect x="186" y="453" width="1114" height="1" fill="#efefef"/><rect x="186" y="468" width="1114" height="1" fill="#efefef"/><rect x="186" y="483" width="1114" height="1" fill="#efefef"/><rect x="186" y="498" width="1114" height="1" fill="#dedede"/><rect x="186" y="513" width="1114" height="1" fill="#efefef"/><rect x="186" y="528" width="1114" height="1" fill="#efefef"/><rect x="186" y="543" width="1114" height="1" fill="#efefef"/><rect x="186" y="558" width="1114" height="1" fill="#dedede"/><rect x="186" y="573" width="1114" height="1" fill="#efefef"/><rect x="186" y="588" width="1114" height="1" fill="#efefef"/>
</svg>
<rect x="1300" y="139" width="11" height="468" fill="#efefef" />
<rect x="1302.4" y="201" width="6.5" height="151.3" fill="#a6a6a6" />
<rect x="186" y="596" width="1114" height="11" fill="#efefef" />
<rect x="440.1" y="598" width="530.8" height="6.8" fill="#a6a6a6" />
<rect x="1300" y="596.7" width="11" height="10.3" fill="#ffffff" />
<defs><clipPath id="cv"><rect x="186" y="139" width="1114" height="457"/></clipPath></defs>
<g clip-path="url(#cv)">
<text x="231.5" y="185" font-size="26" fill="#999" font-weight="bold" textLength="578.2" lengthAdjust="spacingAndGlyphs" >ACCOUNT OWNERSHIP DIAGRAM TUTORIAL</text>
<rect x="231.5" y="196.8" width="1080" height="1.8" fill="#9a9a9a" />
<text x="1132.4" y="183.2" font-size="16.3" fill="#a0a0a0" textLength="80.6" lengthAdjust="spacingAndGlyphs" >Anna Reze</text>
<rect x="1229.4" y="172" width="1.6" height="14.6" fill="#a0a0a0" />
<text x="1246.5" y="183.2" font-size="16.3" fill="#a0a0a0" textLength="53.4" lengthAdjust="spacingAndGlyphs" >May 18</text>
<path d="M335 507.3 H413" stroke="#999" stroke-width="1.6" fill="none"/>
<path d="M419 507.3 L406.5 503.0 V511.6 Z" fill="#999"/>
<path d="M542.7 507.3 H581 Q585.3 507.3 585.3 503 V403" stroke="#999" stroke-width="1.6" fill="none"/>
<path d="M585.3 386.6 V286.5 Q585.3 282.2 589.6 282.2 H620" stroke="#999" stroke-width="1.6" fill="none"/>
<path d="M627 282.2 L614.5 277.9 V286.5 Z" fill="#999"/>
<path d="M581 507.3 Q585.3 507.3 585.3 511.6 V527" stroke="#999" stroke-width="1.6" fill="none"/>
<path d="M585.3 547 V600" stroke="#999" stroke-width="1.6" fill="none"/>
<path d="M585.3 560 Q585.3 564.3 589.6 564.3 H620" stroke="#999" stroke-width="1.6" fill="none"/>
<path d="M627.5 564.3 L615.0 560.0 V568.5999999999999 Z" fill="#999"/>
<path d="M691.3 527 V493 Q691.3 488.7 695.6 488.7 H708" stroke="#999" stroke-width="1.6" fill="none"/>
<path d="M812.5 488.7 H830" stroke="#999" stroke-width="1.6" fill="none"/>
<path d="M837.5 488.7 L825.0 484.4 V493.0 Z" fill="#999"/>
<path d="M964.3 488.7 H1002 Q1006.3 488.7 1006.3 493 V600" stroke="#999" stroke-width="1.6" fill="none"/>
<path d="M754.5 564.3 H794" stroke="#999" stroke-width="1.6" fill="none"/>
<path d="M864.5 564.3 H897 Q901.3 564.3 901.3 568.6 V590" stroke="#999" stroke-width="1.6" fill="none"/>
<path d="M901.3 596.5 L897.0 584.0 H905.5999999999999 Z" fill="#999"/>
<rect x="207.7" y="468.9" width="127.3" height="76.9" rx="3.5" fill="#fff" stroke="#9a9a9a" stroke-width="1.6"/>
<text x="271.4" y="501.8" font-size="13.35" fill="#333" font-weight="bold" text-anchor="middle" >AE or SDR sells a</text>
<text x="271.4" y="517.6" font-size="13.35" fill="#333" font-weight="bold" text-anchor="middle" >business package</text>
<path d="M480.1 470.8 Q481.3 470 482.5 470.8 L541.5 506.4 Q542.7 507.2 541.5 508 L482.5 543.4 Q481.3 544.2 480.1 543.4 L421.1 508 Q419.9 507.2 421.1 506.4 Z" fill="#fff" stroke="#9a9a9a" stroke-width="1.6"/>
<text x="481.3" y="494" font-size="13.35" fill="#333" font-weight="bold" text-anchor="middle" >Account</text>
<text x="481.3" y="510" font-size="13.35" fill="#333" font-weight="bold" text-anchor="middle" >owned by</text>
<text x="481.3" y="526" font-size="13.35" fill="#333" font-weight="bold" text-anchor="middle" >AE?</text>
<rect x="628.2" y="244.2" width="126.6" height="76.2" rx="3.5" fill="#fff" stroke="#9a9a9a" stroke-width="1.6"/>
<text x="691.5" y="268.9" font-size="13.35" fill="#333" font-weight="bold" text-anchor="middle" >AE keeps</text>
<text x="691.5" y="284.6" font-size="13.35" fill="#333" font-weight="bold" text-anchor="middle" >ownershp of the</text>
<text x="691.5" y="300.3" font-size="13.35" fill="#333" font-weight="bold" text-anchor="middle" >account</text>
<rect x="628.3" y="527" width="126.2" height="100" rx="3.5" fill="#fdd9a6" stroke="#9a9a9a" stroke-width="1.6"/>
<text x="691.3" y="551.75" font-size="13.35" fill="#333" font-weight="bold" text-anchor="middle" >AE has open</text>
<text x="691.3" y="567.5" font-size="13.35" fill="#333" font-weight="bold" text-anchor="middle" >opportunity on</text>
<text x="691.3" y="583.25" font-size="13.35" fill="#333" font-weight="bold" text-anchor="middle" >account</text>
<rect x="838.3" y="450.8" width="126" height="76" rx="3.5" fill="#fdd9a6" stroke="#9a9a9a" stroke-width="1.6"/>
<text x="901.2" y="468.0" font-size="13.35" fill="#333" font-weight="bold" text-anchor="middle" >Hand off account</text>
<text x="901.2" y="483.83" font-size="13.35" fill="#333" font-weight="bold" text-anchor="middle" >to SMB AM.</text>
<text x="901.2" y="499.66" font-size="13.35" fill="#333" font-weight="bold" text-anchor="middle" >Round Robin after</text>
<text x="901.2" y="515.49" font-size="13.35" fill="#333" font-weight="bold" text-anchor="middle" >120 days</text>
<text x="585.3" y="397.5" font-size="13.35" fill="#333" font-weight="bold" text-anchor="middle" >Yes</text>
<text x="585.2" y="540.9" font-size="13.35" fill="#333" font-weight="bold" text-anchor="middle" >No</text>
<text x="708" y="492" font-size="13.35" fill="#333" font-weight="bold" textLength="104.5" lengthAdjust="spacingAndGlyphs" >&lt;100 Employees</text>
<text x="794.5" y="558.25" font-size="13.35" fill="#333" font-weight="bold" >101-5,000</text>
<text x="794.5" y="574.5" font-size="13.35" fill="#333" font-weight="bold" >Employees</text>
<path d="M344 469 H362 V484.5 H355.5 L353 488 L350.5 484.5 H344 Z" fill="#777"/><rect x="348.5" y="473.8" width="9" height="1.8" fill="#fff"/><rect x="348.5" y="477.8" width="9" height="1.8" fill="#fff"/>
<path d="M554 469 H572 V484.5 H565.5 L563 488 L560.5 484.5 H554 Z" fill="#777"/><rect x="558.5" y="473.8" width="9" height="1.8" fill="#fff"/><rect x="558.5" y="477.8" width="9" height="1.8" fill="#fff"/>
<path d="M765.2 244.2 H783.2 V259.7 H776.7 L774.2 263.2 L771.7 259.7 H765.2 Z" fill="#777"/><rect x="769.7" y="249.0" width="9" height="1.8" fill="#fff"/><rect x="769.7" y="253.0" width="9" height="1.8" fill="#fff"/>
<path d="M974.2 450 H992.2 V465.5 H985.7 L983.2 469 L980.7 465.5 H974.2 Z" fill="#777"/><rect x="978.7" y="454.8" width="9" height="1.8" fill="#fff"/><rect x="978.7" y="458.8" width="9" height="1.8" fill="#fff"/>
<g transform="translate(1107.6,243.9) rotate(6.1)">
<path d="M0 0 H145 L181.6 36.5 V204.8 H0 Z" fill="#fedc6e" stroke="#dcc263" stroke-width="1.2"/>
<path d="M145 0 L181.6 36.5 H145 Z" fill="#d8bd5c"/>
<text x="4.8" y="46.8" font-size="13.75" fill="#2b2f36" font-weight="bold" >Welcome to Lucidchart!</text>
<text x="4.8" y="80.6" font-size="13.75" fill="#2b2f36" font-weight="bold" >This document is a</text>
<text x="4.8" y="97.05" font-size="13.75" fill="#2b2f36" font-weight="bold" >tutorial designed</text>
<text x="4.8" y="113.5" font-size="13.75" fill="#2b2f36" font-weight="bold" >specifically for you. Click</text>
<text x="4.8" y="129.95" font-size="13.75" fill="#2b2f36" font-weight="bold" >on the note icons to learn</text>
<text x="4.8" y="146.4" font-size="13.75" fill="#2b2f36" font-weight="bold" >more about building</text>
<text x="4.8" y="162.85" font-size="13.75" fill="#2b2f36" font-weight="bold" >process flows in</text>
<text x="4.8" y="179.3" font-size="13.75" fill="#2b2f36" font-weight="bold" >Lucidchart.</text>
</g>
</g>
<rect x="1311" y="118" width="41" height="489.4" fill="#e6e6e6" />
<rect x="1311" y="118" width="1" height="489.4" fill="#c9c9c9" />
<path d="M1330 126.5 L1324.5 132.5 L1330 138.5 M1339 126.5 L1333.5 132.5 L1339 138.5" stroke="#6e7984" stroke-width="1.8" fill="none"/>
<path d="M1324.6 159.3 H1334 L1339.2 164.5 V176.6 H1324.6 Z" stroke="#3c4650" stroke-width="1.8" fill="none" stroke-linejoin="round"/>
<path d="M1321.7 206 H1343 V221.8 H1326 V209.5 Z" fill="#3c4650"/><path d="M1330 211 H1333 V214.2 L1331.5 217 H1330.2 L1331 214.2 H1330 Z M1335 211 H1338 V214.2 L1336.5 217 H1335.2 L1336 214.2 H1335 Z" fill="#e6e6e6"/>
<rect x="1323.5" y="252" width="18" height="12" fill="none" stroke="#3c4650" stroke-width="1.8"/><rect x="1321.7" y="250" width="20.5" height="2.2" fill="#3c4650"/><rect x="1331.5" y="249" width="2" height="3" fill="#3c4650"/><path d="M1330 255 L1335.5 258 L1330 261 Z" fill="#3c4650"/><path d="M1329 264 L1326.5 270 M1336 264 L1338.5 270" stroke="#3c4650" stroke-width="1.6"/>
<circle cx="1332.1" cy="306.5" r="8.8" fill="#3c4650"/><path d="M1332 300.5 V307 L1336 310.5" stroke="#e6e6e6" stroke-width="1.6" fill="none"/>
<g stroke="#3c4650" stroke-width="1.7" fill="#e6e6e6" stroke-linejoin="round"><path d="M1324 357 L1332.1 361.5 L1340.2 357"/><path d="M1324 353 L1332.1 357.5 L1340.2 353"/><path d="M1332.1 342.8 L1340.2 348 L1332.1 353 L1324 348 Z"/></g>
<path d="M1324.2 388.8 H1334.5 L1340 394.3 V406.8 H1324.2 Z" stroke="#3c4650" stroke-width="1.8" fill="none" stroke-linejoin="round"/><path d="M1332 393.5 Q1336 398.5 1336 400.5 Q1336 403.5 1332 403.5 Q1328 403.5 1328 400.5 Q1328 398.5 1332 393.5 Z" fill="#3c4650"/>
<path d="M1323.3 435.7 H1341.3 V448 H1330 L1325.5 452.5 V448 H1323.3 Z" stroke="#3c4650" stroke-width="1.8" fill="none" stroke-linejoin="round"/>
<g fill="#3c4650"><ellipse cx="1332.1" cy="482.8" rx="8.9" ry="3.4"/><path d="M1323.2 485.5 Q1332.1 490 1341 485.5 V489.5 Q1332.1 494 1323.2 489.5 Z"/><path d="M1323.2 491.5 Q1332.1 496 1341 491.5 V495.3 Q1332.1 500.5 1323.2 495.3 Z"/></g>
<g stroke="#8e949a" stroke-width="1.8"><path d="M1329.2 527 V530.6 M1329.2 535.5 V539 M1323.2 533 H1327 M1331.6 533 H1335.8"/></g><g stroke="#3c4650" stroke-width="1.4"><path d="M1324.4 528.1 L1326.8 530.5 M1334 528.1 L1331.6 530.5 M1324.4 537.8 L1326.8 535.4"/></g><path d="M1329.6 533.2 L1339.6 543.4" stroke="#3c4650" stroke-width="2.8" stroke-linecap="round"/>
<rect x="0" y="607" width="1352" height="31" fill="#737e88" />
<rect x="0" y="638" width="1352" height="2" fill="#f4f4f4" />
<rect x="104.8" y="614.2" width="3" height="2.6" fill="#fff" />
<rect x="110" y="614.2" width="15.4" height="2.6" fill="#fff" />
<rect x="104.8" y="621.7" width="3" height="2.6" fill="#fff" />
<rect x="110" y="621.7" width="15.4" height="2.6" fill="#fff" />
<rect x="104.8" y="629.2" width="3" height="2.6" fill="#fff" />
<rect x="110" y="629.2" width="15.4" height="2.6" fill="#fff" />
<rect x="142.8" y="614" width="8.6" height="8.5" fill="#fff" />
<rect x="152.5" y="614" width="8.6" height="8.5" fill="#fff" />
<rect x="142.8" y="623.8" width="8.6" height="8.5" fill="#fff" />
<rect x="152.5" y="623.8" width="8.6" height="8.5" fill="#fff" />
<path d="M175.1 607 H245.8 V631 Q245.8 634.5 242.3 634.5 H178.6 Q175.1 634.5 175.1 631 Z" fill="#3c4650"/>
<text x="185.5" y="625.6" font-size="14.5" fill="#fff" font-weight="bold" textLength="37.3" lengthAdjust="spacingAndGlyphs" >Page 1</text>
<path d="M228.2 618.3 H236 L232.1 624 Z" fill="#fff"/>
<circle cx="269" cy="622.9" r="8.2" fill="none" stroke="#fff" stroke-width="1.8"/><path d="M269 618 V627.8 M264.1 622.9 H273.9" stroke="#fff" stroke-width="2"/>
<rect x="1055" y="612" width="1.2" height="22.6" fill="#3c4650" />
<circle cx="1077.2" cy="623" r="8.2" fill="none" stroke="#fff" stroke-width="1.8"/><path d="M1077.2 617 L1081.2 628 L1077.2 625.5 L1073.2 628 Z" fill="#fff"/>
<rect x="1101.8" y="622" width="14.4" height="2" fill="#fff" />
<rect x="1127.7" y="621.2" width="139.6" height="3.8" rx="1.9" fill="#a9aeb3"/>
<circle cx="1181.9" cy="623.1" r="6" fill="#29a8e0"/>
<path d="M1286 615.7 V630 M1278.9 622.9 H1293.2" stroke="#fff" stroke-width="2"/>
<text x="1300.3" y="628.2" font-size="14.5" fill="#fff" font-weight="bold" textLength="26.6" lengthAdjust="spacingAndGlyphs" >69%</text>
<path d="M1332.6 620.3 H1340 L1336.3 625.4 Z" fill="#fff"/>
<rect x="0" y="0" width="1" height="640" fill="#8f8c5a" />
<rect x="1" y="4" width="1" height="636" fill="#eeeeee" />
<g filter="url(#sh2)"><path d="M30 118.7 H40.7 L47.3 109.3 L54 118.7 H310.3 Q314.3 118.7 314.3 122.7 V170.8 Q314.3 174.8 310.3 174.8 H30 Q26 174.8 26 170.8 V122.7 Q26 118.7 30 118.7 Z" fill="#fff"/></g>
<text x="36.7" y="143.3" font-size="14.5" fill="#6d7884" textLength="218.9" lengthAdjust="spacingAndGlyphs" stroke="#6d7884" stroke-width="0.3">Browse shape libraries for ERDs, UML,</text>
<text x="36.7" y="160.6" font-size="14.5" fill="#6d7884" textLength="130.2" lengthAdjust="spacingAndGlyphs" stroke="#6d7884" stroke-width="0.3">mind maps, and more.</text>
<path d="M286.5 134 L299.5 147 M299.5 134 L286.5 147" stroke="#6d7884" stroke-width="2.6"/>
</svg></body></html>
